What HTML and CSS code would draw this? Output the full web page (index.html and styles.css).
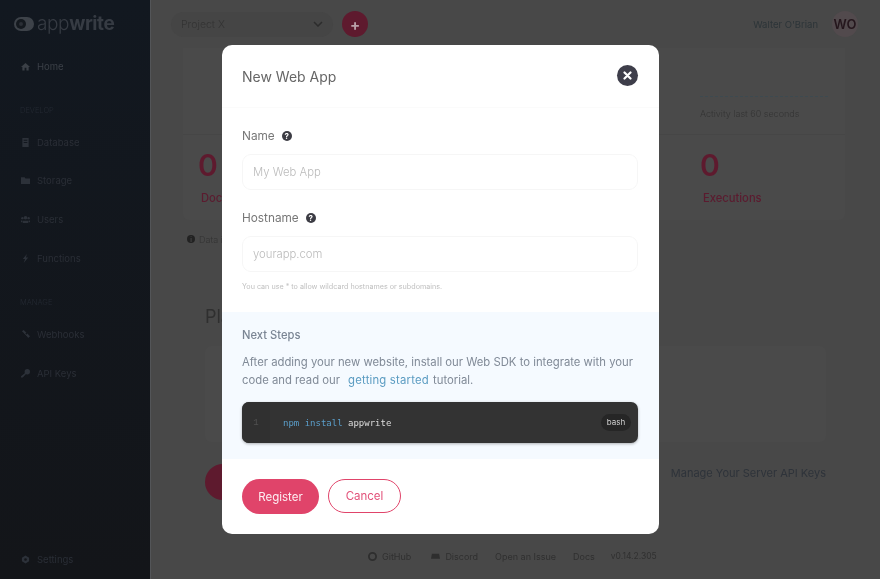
FILE: index.html
```html
<!DOCTYPE html>
<html lang="en">
<head>
<meta charset="utf-8">
<title>New Web App</title>
<link rel="stylesheet" href="styles.css">
</head>
<body>
<div class="app">
  <aside class="sidebar">
    <div class="logo">
      <svg class="logo-mark" width="20" height="14" viewBox="0 0 20 14"><rect width="20" height="14" rx="7" fill="#3d4249"/><circle cx="7" cy="7" r="5" fill="#14191f"/><circle cx="7" cy="7" r="2" fill="#2a2f36"/></svg>
      <span class="logo-text">app<b>write</b></span>
    </div>
    <a class="nav-link active"><svg class="nav-icon" viewBox="0 0 10 10"><path d="M5 1 0 5.5h1.5V9.500h2.500V6.500h2V9.500h2.500V5.500H10z"/></svg>Home</a>
    <div class="nav-title first">Develop</div>
    <a class="nav-link"><svg class="nav-icon" viewBox="0 0 10 10"><path d="M1.500 0h7v10h-7zM3 2v1h4V2zM3 4.500v1h4v-1z"/></svg>Database</a>
    <a class="nav-link"><svg class="nav-icon" viewBox="0 0 10 10"><path d="M0 1.500h4l1 1.200h5V9H0z"/></svg>Storage</a>
    <a class="nav-link"><svg class="nav-icon" viewBox="0 0 10 10"><circle cx="5" cy="3" r="2"/><circle cx="1.500" cy="3.500" r="1.300"/><circle cx="8.500" cy="3.500" r="1.300"/><path d="M2 9V6.500h6V9zM0 6h1.500v2H0zM8.500 6H10v2H8.500z"/></svg>Users</a>
    <a class="nav-link"><svg class="nav-icon" viewBox="0 0 10 10"><path d="M6.500 0 2 5.500h2.500L3 10l5-6H5.500z"/></svg>Functions</a>
    <div class="nav-title second">Manage</div>
    <a class="nav-link"><svg class="nav-icon" viewBox="0 0 10 10"><path d="M1 1.500 3 0l3 3-1.500 1.500zM5.500 5.500 7 4l3 3-2 2z"/><path d="M3 3l4 4" stroke="#2a2f36" fill="none"/></svg>Webhooks</a>
    <a class="nav-link"><svg class="nav-icon" viewBox="0 0 10 10"><path d="M10 3a3 3 0 1 1-6 0 3 3 0 0 1 6 0zM4.500 4.500l1 1L2 9.500H0V8z"/></svg>API Keys</a>
    <a class="nav-link bottom"><svg class="nav-icon" viewBox="0 0 10 10"><path fill-rule="evenodd" d="M5 0.500 9 3v4L5 9.500 1 7V3zM5 3.500a1.500 1.500 0 1 0 0 3 1.500 1.500 0 0 0 0-3z"/></svg>Settings</a>
  </aside>
  <main class="main">
    <header class="topbar">
      <div class="project">Project X<svg width="10" height="6" viewBox="0 0 10 6"><path d="M1 1l4 4 4-4" fill="none" stroke="#2c2c2c" stroke-width="1.500"/></svg></div>
      <div class="add">+</div>
      <div class="user">Walter O'Brian</div>
      <div class="avatar">WO</div>
    </header>
    <section class="stats">
      <div class="stats-top">
        <div class="activity"><div class="activity-line"></div><div class="activity-text">Activity last 60 seconds</div></div>
      </div>
      <div class="stats-row">
        <div class="stat"><div class="num">0</div><div class="stat-label">Documents</div></div>
        <div class="stat right"><div class="num">0</div><div class="stat-label">Executions</div></div>
      </div>
    </section>
    <div class="note"><span class="note-dot">i</span>Data is updated periodically</div>
    <section class="platforms">
      <h2 class="section-title">Platforms</h2>
      <div class="platform-card"></div>
      <div class="platform-actions"><div class="round-btn"></div><div class="manage">Manage Your Server API Keys</div></div>
    </section>
    <footer class="footer">
      <span class="foot-item"><svg width="9" height="9" viewBox="0 0 10 10"><circle cx="5" cy="5" r="4" fill="none" stroke="#2e2e2e" stroke-width="2"/></svg>GitHub</span>
      <span class="foot-item discord"><svg width="9" height="8" viewBox="0 0 10 8"><path d="M1 1.500h8l1 5.500H0z" fill="#2e2e2e"/></svg>Discord</span>
      <span class="foot-item issue">Open an Issue</span>
      <span class="foot-item docs">Docs</span>
      <span class="foot-item ver">v0.14.2.305</span>
    </footer>
  </main>
</div>
<div class="modal">
  <div class="modal-head">
    <h1 class="modal-title">New Web App</h1>
    <button class="close" type="button"><svg width="9" height="9" viewBox="0 0 9 9"><path d="M1.500 1.500l6 6M7.500 1.500l-6 6" stroke="#fff" stroke-width="2.200" stroke-linecap="round"/></svg></button>
  </div>
  <div class="form">
    <label class="field-label">Name <span class="help">?</span></label>
    <div class="input">My Web App</div>
    <label class="field-label second-label">Hostname <span class="help">?</span></label>
    <div class="input">yourapp.com</div>
    <p class="hint">You can use * to allow wildcard hostnames or subdomains.</p>
  </div>
  <div class="next">
    <h3 class="next-title">Next Steps</h3>
    <p class="next-text">After adding your new website, install our Web SDK to integrate with your code and read our <a class="link">getting started</a> tutorial.</p>
    <div class="code">
      <div class="gutter">1</div>
      <code class="code-line"><span class="kw">npm install</span> appwrite</code>
      <span class="lang">bash</span>
    </div>
  </div>
  <div class="modal-foot">
    <button class="btn primary" type="button">Register</button>
    <button class="btn ghost" type="button">Cancel</button>
  </div>
</div>
</body>
</html>
```
FILE: styles.css
```css
* { box-sizing: border-box; }
html, body { margin: 0; height: 100%; }
body { width: 880px; height: 579px; overflow: hidden; background: #484848; font-family: Inter, "Noto Sans", sans-serif; font-weight: 300; position: relative; }
h1, h2, h3, p { margin: 0; font-weight: 400; }

.app { display: flex; width: 880px; height: 579px; filter: blur(0.6px); }

.sidebar { width: 150px; flex: none; display: flex; flex-direction: column; padding-top: 14px; background: linear-gradient(#121820, #131519); box-shadow: 1px 0 0 #535558; color: #2a2e36; font-size: 9.500px; }
.logo { display: flex; align-items: center; gap: 3px; height: 20px; padding-left: 14px; margin-bottom: 13px; }
.logo-text { font-size: 19px; line-height: 20px; color: #363b43; letter-spacing: -0.400px; }
.logo-text b { font-weight: 700; }
.nav-link { display: flex; align-items: center; height: 38.600px; flex: none; padding-left: 21px; font-weight: 400; }
.nav-link.active { color: #3b4047; height: 38px; }
.nav-link.active .nav-icon { fill: #3b4047; }
.nav-link.bottom { margin-top: auto; margin-bottom: 0; }
.nav-icon { width: 9px; height: 9px; margin-right: 7px; fill: #2c3139; flex: none; }
.nav-title { font-size: 7.500px; text-transform: uppercase; color: #242932; padding-left: 20px; height: 10px; line-height: 10px; }
.nav-title.first { margin-top: 21px; margin-bottom: 7px; }
.nav-title.second { margin-top: 21px; margin-bottom: 7px; }

.main { flex: 1; min-width: 0; display: flex; flex-direction: column; padding: 0 35px 0 33px; }
.topbar { height: 48px; flex: none; display: flex; align-items: center; margin: 0 -13px 0 -12px; }
.project { width: 162px; height: 25px; border-radius: 13px; background: #454545; display: flex; align-items: center; justify-content: space-between; padding: 0 10px; font-size: 10.500px; color: #333; }
.add { width: 26px; height: 26px; margin-left: 9px; border-radius: 50%; background: #5e1a2e; color: #b9a0a8; font-size: 15px; font-weight: 700; display: flex; align-items: center; justify-content: center; }
.user { margin-left: auto; font-size: 9.500px; color: #2c3438; font-weight: 400; }
.avatar { width: 26px; height: 26px; margin-left: 14px; border-radius: 50%; background: #524a4d; color: #24161c; font-size: 13px; font-weight: 600; display: flex; align-items: center; justify-content: center; }

.stats { height: 172px; flex: none; background: #4a4a4a; border-radius: 0 0 6px 6px; display: flex; flex-direction: column; }
.stats-top { height: 87px; display: flex; justify-content: flex-end; align-items: flex-end; border-bottom: 1px solid #464646; }
.activity { width: 145px; padding: 0 17px 15px 0; color: #343434; font-size: 9px; }
.activity-line { border-top: 1px dashed #3d4a50; margin: 0 0 11px 0; }
.stats-row { flex: 1; display: flex; justify-content: space-between; padding: 14px 15px 0; }
.stat.right { width: 130px; }
.num { font-size: 30px; line-height: 32px; font-weight: 600; color: #5e1a2e; }
.stat-label { margin-top: 10px; padding-left: 3px; font-size: 11.200px; font-weight: 500; color: #5b1b2f; }

.note { display: flex; align-items: center; gap: 4px; margin: 13px 0 0 4px; font-size: 9px; color: #333; height: 12px; }
.note-dot { width: 8px; height: 8px; border-radius: 50%; background: #222; color: #484848; font-size: 6px; font-weight: 700; display: flex; align-items: center; justify-content: center; }

.platforms { margin: 0 19px 0 22px; display: flex; flex-direction: column; }
.section-title { margin-top: 59px; height: 26px; font-size: 18px; line-height: 26px; color: #2f2f2f; }
.platform-card { height: 96px; margin-top: 16px; background: #4a4a4a; border-radius: 6px; }
.platform-actions { display: flex; align-items: flex-start; justify-content: space-between; margin-top: 22px; }
.round-btn { width: 36px; height: 36px; border-radius: 50%; background: #5e1a2e; }
.manage { margin-top: 1px; font-size: 11px; line-height: 16px; color: #2e333a; font-weight: 400; }

.footer { margin-top: auto; height: 46px; display: flex; align-items: center; padding-left: 185px; font-size: 9px; color: #303030; font-weight: 400; }
.foot-item { display: flex; align-items: center; gap: 5px; }
.discord { margin-left: 20px; }
.issue { margin-left: 17px; }
.docs { margin-left: 17px; }
.ver { margin-left: 16px; font-size: 8.500px; }

.modal { position: absolute; left: 222px; top: 45px; width: 437px; height: 489px; background: #fff; border-radius: 10px; overflow: hidden; display: flex; flex-direction: column; filter: blur(0.4px); }
.modal-head { height: 63px; flex: none; display: flex; align-items: center; justify-content: space-between; padding: 0 21px 0 20px; border-bottom: 1px solid #fbfbfb; }
.modal-title { font-size: 14px; color: #666; font-weight: 400; }
.close { width: 21px; height: 21px; padding: 0; border: 0; margin-top: -2px; border-radius: 50%; background: #3e3e4a; display: flex; align-items: center; justify-content: center; }

.form { height: 204px; flex: none; padding: 20px 21px 0 20px; }
.field-label { display: flex; align-items: center; gap: 7px; height: 16px; font-size: 11.800px; color: #777; font-weight: 400; }
.second-label { margin-top: 20px; }
.help { width: 10px; height: 10px; border-radius: 50%; background: #3c3c44; color: #fff; font-size: 8px; line-height: 10px; font-weight: 700; text-align: center; }
.input { height: 36px; margin-top: 10px; padding: 0 10px; display: flex; align-items: center; border: 1px solid #f6f6f6; border-radius: 9px; font-size: 11.300px; color: #bbb; background: #fff; }
.hint { margin-top: 10px; font-size: 7.200px; line-height: 10px; color: #c0c0c0; }

.next { height: 147px; flex: none; background: #f5faff; padding: 15px 21px 0 20px; }
.next-title { font-size: 11.200px; line-height: 16px; font-weight: 500; color: #7a8594; }
.next-text { margin-top: 10px; font-size: 11.300px; line-height: 18px; color: #808a97; }
.link { color: #5b9cc2; padding: 0 1px 0 5px; letter-spacing: 0.200px; }
.code { display: flex; align-items: center; height: 41px; margin-top: 13px; border-radius: 7px; background: #333; box-shadow: 0 1px 3px rgba(0, 0, 0, 0.3); overflow: hidden; }
.gutter { width: 28px; height: 41px; flex: none; display: flex; align-items: center; justify-content: center; background: #303030; color: #505050; font: 9px "Liberation Mono", monospace; }
.code-line { margin-left: 13px; font: 9px "DejaVu Sans Mono", monospace; color: #ddd; }
.kw { color: #5b9fcb; }
.lang { margin-left: auto; margin-right: 7px; width: 30px; height: 17px; border-radius: 9px; background: #262626; color: #cfcfcf; font-size: 8px; line-height: 16px; text-align: center; font-weight: 400; }

.modal-foot { flex: 1; display: flex; align-items: flex-start; gap: 9px; padding: 20px 20px 0; }
.btn { height: 35px; border-radius: 18px; font-family: inherit; font-size: 11.500px; font-weight: 400; padding: 0; }
.primary { width: 77px; border: 0; background: #e0446a; color: #fdeef2; }
.ghost { width: 73px; height: 34px; border: 1.500px solid #e0446a; background: #fff; color: #e2527a; }
```
